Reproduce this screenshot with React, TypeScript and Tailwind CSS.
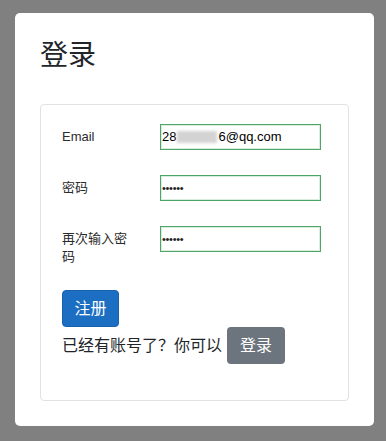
import { useState } from 'react'

const CJK = "font-['Liberation_Sans','Noto_Sans_CJK_SC',sans-serif]"

function Field({ label, children }: { label: string; children: React.ReactNode }) {
  return (
    <div className="flex items-start">
      <label className="w-[98px] pr-[26px] pt-[4px] text-[13px] leading-[18px] text-[#2b2b2b]">{label}</label>
      {children}
    </div>
  )
}

function BoxInput({ children }: { children: React.ReactNode }) {
  return (
    <div className="flex h-[26px] w-[161px] items-center overflow-hidden border border-[#4fa468] bg-white pl-[1px] shadow-[inset_0_0_0_1px_#d9eedf] text-[13px] text-black">
      {children}
    </div>
  )
}

export default function App() {
  const [email] = useState('6@qq.com')

  return (
    <div className={`min-h-[441px] bg-[#808080] pt-[13px] ${CJK}`}>
      <div className="ml-[15px] h-[413px] w-[359px] rounded-[5px] bg-white px-[25px] pt-[24px]">
        <h1 className="text-[28px] leading-[38px] text-[#212529]">登录</h1>

        <div className="mt-[29px] h-[297px] rounded-[4px] border border-[#e2e2e2] px-[21px] pt-[19px]">
          <div className="mb-[25px]">
            <Field label="Email">
              <BoxInput>
                <span>28</span>
                <span className="mx-[1px] h-[12px] w-[40px] bg-[#d3d3d3] blur-[1.5px]" />
                <span>{email}</span>
              </BoxInput>
            </Field>
          </div>
          <div className="mb-[25px]">
            <Field label="密码">
              <BoxInput>
                <span className="text-[11px] tracking-[-0.3px] text-[#222]">••••••</span>
              </BoxInput>
            </Field>
          </div>
          <div className="mb-[24px]">
            <Field label="再次输入密码">
              <BoxInput>
                <span className="text-[11px] tracking-[-0.3px] text-[#222]">••••••</span>
              </BoxInput>
            </Field>
          </div>

          <button
            type="button"
            className="block h-[37px] w-[57px] rounded-[4px] border border-[#1861ac] bg-[#1b6ec2] text-[16px] text-white"
          >
            注册
          </button>
          <div className="flex items-center gap-[5px]">
            <span className="text-[16px] text-[#212529]">已经有账号了？你可以</span>
            <button type="button" className="h-[37px] w-[58px] rounded-[4px] bg-[#6c757d] text-[16px] text-white">
              登录
            </button>
          </div>
        </div>
      </div>
    </div>
  )
}
